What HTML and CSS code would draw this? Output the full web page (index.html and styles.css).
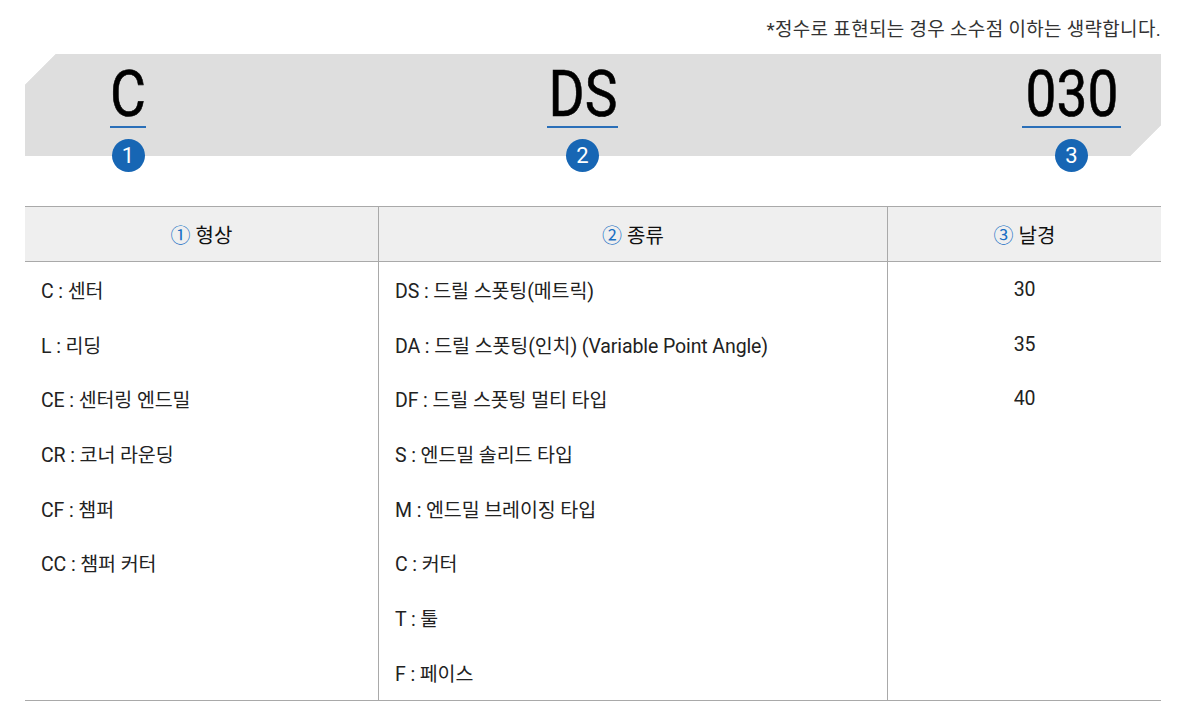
FILE: index.html
```html
<!DOCTYPE html>
<html lang="ko">
<head>
<meta charset="utf-8">
<link rel="stylesheet" href="styles.css">
</head>
<body>
<div class="page">
  <p class="note">*정수로 표현되는 경우 소수점 이하는 생략합니다.</p>
  <div class="banner">
    <div class="code code-1"><span class="code-text"><span class="glyphs">C</span></span><span class="badge">1</span></div>
    <div class="code code-2"><span class="code-text"><span class="glyphs">DS</span></span><span class="badge">2</span></div>
    <div class="code code-3"><span class="code-text"><span class="glyphs">030</span></span><span class="badge">3</span></div>
  </div>
  <div class="table">
    <div class="col col-shape">
      <div class="head"><span class="num">①</span> 형상</div>
      <div class="cell">C : 센터</div>
      <div class="cell">L : 리딩</div>
      <div class="cell">CE : 센터링 엔드밀</div>
      <div class="cell">CR : 코너 라운딩</div>
      <div class="cell">CF : 챔퍼</div>
      <div class="cell">CC : 챔퍼 커터</div>
    </div>
    <div class="col col-type">
      <div class="head"><span class="num">②</span> 종류</div>
      <div class="cell">DS : 드릴 스폿팅(메트릭)</div>
      <div class="cell">DA : 드릴 스폿팅(인치) (Variable Point Angle)</div>
      <div class="cell">DF : 드릴 스폿팅 멀티 타입</div>
      <div class="cell">S : 엔드밀 솔리드 타입</div>
      <div class="cell">M : 엔드밀 브레이징 타입</div>
      <div class="cell">C : 커터</div>
      <div class="cell">T : 툴</div>
      <div class="cell">F : 페이스</div>
    </div>
    <div class="col col-dia">
      <div class="head"><span class="num">③</span> 날경</div>
      <div class="cell center">30</div>
      <div class="cell center">35</div>
      <div class="cell center">40</div>
    </div>
  </div>
</div>
</body>
</html>
```

FILE: styles.css
```css
* { box-sizing: border-box; }
html, body { margin: 0; padding: 0; background: #fff; }
body {
  font-family: "Roboto", "Noto Sans CJK KR", sans-serif;
  color: #222;
  width: 1200px;
  height: 708px;
  overflow: hidden;
}
.page {
  padding: 0 39px 0 25px;
}
.note {
  margin: 0;
  height: 54px;
  padding-top: 17px;
  text-align: right;
  font-size: 19px;
  line-height: 26px;
  color: #333;
  letter-spacing: 0.3px;
}
.banner {
  height: 102px;
  display: flex;
  align-items: flex-start;
  background: linear-gradient(135deg, transparent 21.5px, #dedede 22px) top left / 51% 100% no-repeat,
              linear-gradient(-45deg, transparent 21.5px, #dedede 22px) bottom right / 50% 100% no-repeat;
}
.code {
  display: flex;
  flex-direction: column;
  align-items: center;
}
.code-1 { margin-left: 85px; width: 36px; }
.code-2 { margin-left: 401px; width: 71px; }
.code-3 { margin-left: 404px; width: 99px; }
.code-text {
  display: flex;
  justify-content: center;
  width: 100%;
  height: 74px;
  padding-top: 12px;
  border-bottom: 2px solid #2a6fb8;
  overflow: visible;
}
.glyphs {
  display: block;
  font-family: "Roboto", sans-serif;
  font-size: 64px;
  line-height: 58px;
  color: #000;
  white-space: nowrap;
  transform: scaleX(0.86);
  -webkit-text-stroke: 0.6px #000;
}
.badge {
  margin-top: 11px;
  width: 33px;
  height: 33px;
  border-radius: 50%;
  background: #1766b4;
  color: #fff;
  font-size: 22px;
  line-height: 33px;
  text-align: center;
  font-family: "Roboto", sans-serif;
  flex: none;
}
.table {
  margin-top: 50px;
  display: grid;
  grid-template-columns: 353px 509px 274px;
  border-top: 1.5px solid #a9a9a9;
  border-bottom: 1.5px solid #a9a9a9;
}
.col + .col { border-left: 1.5px solid #a9a9a9; }
.col {
  display: flex;
  flex-direction: column;
}
.head {
  height: 55px;
  background: #efefef;
  border-bottom: 1.5px solid #a9a9a9;
  display: flex;
  align-items: center;
  justify-content: center;
  font-size: 20px;
  color: #111;
  gap: 5px;
}
.num {
  color: #1a6fc4;
  font-family: "Noto Sans CJK KR", sans-serif;
  font-size: 20px;
}
.cell {
  height: 54.7px;
  display: flex;
  align-items: center;
  padding-left: 16px;
  font-size: 19.5px;
  color: #222;
  letter-spacing: -0.1px;
}
.cell.center { justify-content: center; padding-left: 0; }
```
